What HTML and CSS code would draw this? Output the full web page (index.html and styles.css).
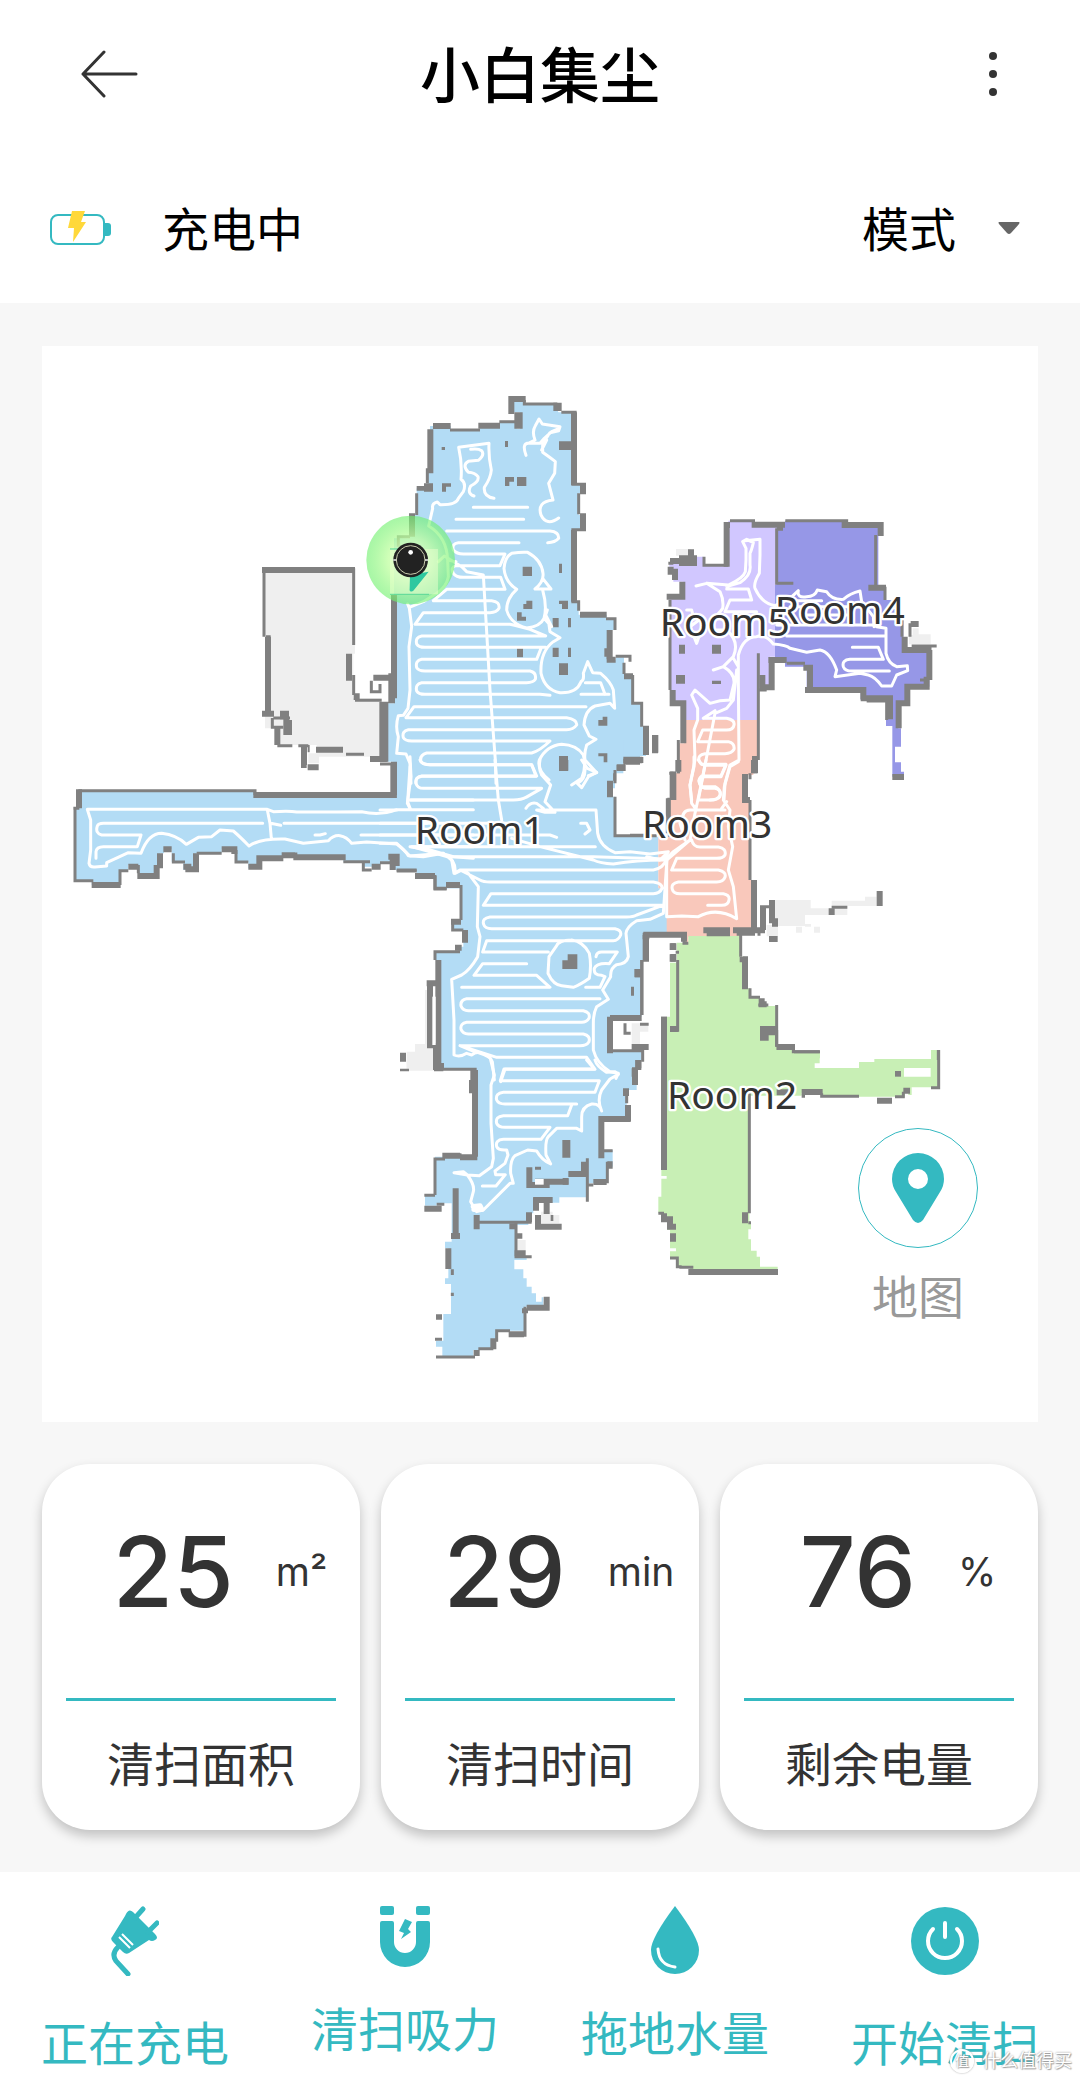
FILE: index.html
```html
<!DOCTYPE html>
<html lang="zh-CN">
<head>
    <meta charset="UTF-8">
    <meta name="viewport" content="width=device-width, initial-scale=1.0">
    <title>小白集尘</title>
    <link rel="stylesheet" href="styles.css">
</head>
<body>
    <header class="header">
        <button class="icon-btn" aria-label="返回">
            <svg width="60" height="48" viewBox="0 0 60 48" fill="none" stroke="#333" stroke-width="3" stroke-linecap="round" stroke-linejoin="round">
                <path d="M24 2L3 24L24 46M3 24H56"/>
            </svg>
        </button>
        <h1>小白集尘</h1>
        <button class="icon-btn" aria-label="更多">
            <svg width="60" height="48" viewBox="0 0 60 48" fill="#333">
                <circle cx="53" cy="6" r="4"/><circle cx="53" cy="24" r="4"/><circle cx="53" cy="42" r="4"/>
            </svg>
        </button>
    </header>

    <div class="status">
        <svg width="62" height="38" viewBox="0 0 62 38">
            <rect x="1" y="4" width="53" height="29" rx="7" fill="none" stroke="#34b9c1" stroke-width="2"/>
            <path d="M54 12h4q3 0 3 3v7q0 3-3 3h-4z" fill="#34b9c1"/>
            <path d="M22 0h13l-4 11h5L23 31l1-14h-6z" fill="#ffd83a"/>
        </svg>
        <span class="status-text">充电中</span>
        <div class="mode">
            <select aria-label="模式">
                <option>模式</option>
            </select>
            <svg class="caret" width="22" height="12" viewBox="0 0 22 12"><path d="M1 0H21Q22 0 21 2L13 11Q11 13 9 11L1 2Q0 0 1 0z" fill="#666"/></svg>
        </div>
    </div>

    <main>
        <section class="map">
            <svg class="plan" viewBox="0 0 2988 3228" role="img" aria-label="房间地图">
                <defs>
                    <radialGradient id="halo">
                        <stop offset="0" stop-color="#f4ffe8" stop-opacity=".95"/>
                        <stop offset=".5" stop-color="#c0ffa0" stop-opacity=".75"/>
                        <stop offset="1" stop-color="#6cf06a" stop-opacity=".6"/>
                    </radialGradient>
                </defs>

                <!-- unexplored areas -->
                <g class="unknown">
                    <path transform="translate(594 402)" d="M75 270H340V655H425V830H230V795H105V745H95V700H80V470H72zM205 820h32v30h-32zM75 700h20v45h-20zM318 495h27v26h-27z"/>
                    <path transform="translate(1014 1242)" d="M135 690h10v165h20v75H80V875h25V852h30zM755 790h50v25h-25v40h-25z"/>
                    <path transform="translate(1014 2142)" d="M60 0h105v32H80V0zM483 455h35v10h20v25h-55zM412 540h25v35h-25z"/>
                    <path transform="translate(1764 462)" d="M138 147h45v20h-45zM848 385h18v18h36v30h-65v-28h11z"/>
                    <path transform="translate(1764 1242)" d="M435 420H542V445H605V422H705V410H740V438H652V465H525V498H435zM498 500h18v18h-18zM552 500h18v18h-18zM525 492h18v8h-18zM410 495h34v34h-34z"/>
                </g>

                <!-- room floors -->
                <g class="room1">
                    <path transform="translate(924 102)" d="M485 57H525V72H615L625 97H670V315H699V340H686V405H699V450H672V665H686V704H770V716H792V750H780V840H797V832H822V885H848V970H875V1040H888V1128H870V1145H820V1170H795V1225H132V1145H100V970H132V475H180V405H200V325H232V270H240V138H302V150H390V137H450V125H500V146H510V97H485z"/>
                    <path transform="translate(54 1272)" d="M45 115V330H95V345H180V300H205V285H235V318H290V285H300V250H312V238H335V275H370V300H408V250H485V238H525V275H565V295H600V262H670V250H705V262H850V275H910V290H960V275H990V258H1010V300H1070V318H1125V355H1240V0H1005V75H585V62H55V115z"/>
                    <path transform="translate(1014 1242)" d="M40 0V105H0V290H45V330H110V350H165V385H240V480H220V510H250V560H235V575H165V600H180V925H285V970H770V900H785V870H690V770H785V600H795V525H865V385H835V230H705V110H690V65H705V40H730V-60H40z"/>
                    <path transform="translate(1014 2142)" d="M190 0V28H285V290H165V405H135V437H170V430H215V545H195V565H205V655H195V672H213V762H190V842H168V860H187V890H280V870H335V840H350V812H435V740H490V712H485V725H468V700H455V680H440V655H430V628H403V600H440V590H408V495H445V460H460V412H515V428H538V412H620V370H680V320H698V270H660V175H740V90H770V0z"/>
                </g>
                <g class="room5">
                    <path transform="translate(1764 462)" d="M295 62H370V75H445V470H420V560H385V662H160V610H130V570H118V290H160V245H130V200H118V190H200V170H220V195H295z"/>
                </g>
                <g class="room4">
                    <path transform="translate(1764 462)" d="M440 80H465V62H645V75H745V265H765V300H800V350H820V450H898V560H830V610H805V685H813V740H795V787H813V815H822V830H787V678H768V600H692V570H530V500H465V475H435V255H440z"/>
                </g>
                <g class="room3">
                    <path transform="translate(1764 462)" d="M162 660H382V780H370V825H345V910H130V820H145V730H162z"/>
                    <path transform="translate(1764 1242)" d="M145 0H375V40H345V120H360V360H375V515H330V530H175V548H160V520H110V385H85V230H118V120H130V40H145z"/>
                </g>
                <g class="room2">
                    <path transform="translate(1764 1242)" d="M175 528H330V590H345V685H360V712H390V738H442V860H495V875H569V910H110V770H120V608H140V548H175z"/>
                    <path transform="translate(1794 2052)" d="M72 -20H410V50H465V65H540V85H515V95H524V114H657V96H703V87H873V60H897V172H815V195H805V182H795V200H545V188H485V197H328V575H333V598H325V628H333V662H350V680H360V710H413V724H150V710H110V684H90V664H108V655H90V600H82V570H72V550H55V500H64V446H80V438H64V420H72zM792 114V140H872V114z" fill-rule="evenodd"/>
                </g>

                <!-- walls -->
                <g class="wall" transform="translate(924 102)">
                    <path d="M523 60V72H622M634 97H680M664 313H708M686 340V403M664 449H708M664 665H686V692M768 716H795V750M797 829H840V845M822 848V882M848 885V970H875V1040M795 1170V1210M232 265V310M200 340V405M180 470H145V500M300 150H390M448 125H500"/>
                    <path class="thick" d="M484 102V57H527M672 97V315M699 310V343M699 400V450M672 450V665M690 704H770M779 750V838M241 148V280M186 400V470M132 645V955M132 1145V1210M249 138H302M385 137H450M888 1037V1125"/>
                    <path class="block" d="M610 68h25v25h-25zM627 184h40v26h-40zM200 318h49v14h-49zM222 310h27v25h-27zM493 97h25v49h-25zM88 965h27v180h-27zM60 1128h50v18h-50zM115 880h20v90h-20zM770 830h27v18h-27zM763 805h18v25h-18zM822 880h27v18h-27zM820 1130h57v20h-57zM800 1155h27v18h-27zM906 1065h19v53h-19z"/>
                    <path class="block" d="M275 201h10v9h-10zM465 183h9v18h-9zM276 310h27v10h-15v15h-12zM465 291h27v14h-14v13h-13zM501 291h28v27h-28zM518 560h28v28h-28zM627 551h9v28h-9zM529 662h18v25h-27v-15h9zM501 697h14v13h13v12h-27zM627 662h27v25h-18v-15h-9zM608 714h18v28h-18zM654 714h9v28h-9zM501 805h18v27h-18zM608 803h18v28h-18zM654 803h9v28h-9zM627 850h27v35h-27zM758 1010h14v27h-27v-17h13zM745 1120h27v27h-11v-18h-16zM627 1128h27v45h-27z"/>
                </g>
                <g class="wall" transform="translate(594 402)">
                    <path d="M72 470V265M341 265V495M341 585V645M345 661H425M112 797H157M175 797H205M318 823H372M78 470H92M100 714H150M97 714V742H130M394 602V635H420V612"/>
                    <path class="thick" d="M66 270H345M84 470V700M327 521V602M112 740V795M228 809H309M400 593H455M350 640V660M192 795V855H200M203 862H236"/>
                    <path class="block" d="M66 692h36v18h-36zM120 692h27v28h9v45h-26v-47h-10zM390 828h52v17h-52zM203 795h6v22h-6z"/>
                </g>
                <g class="wall" transform="translate(54 1272)">
                    <path d="M55 62H585V75M40 115H58M45 110V332H100M180 345V302H205M235 285V310M340 250V276H375M410 250H485M528 240V276H565M850 275H930M910 275V300H935M960 278H990M1010 303H1070M1125 318V355H1160M705 252H712"/>
                    <path class="thick" d="M57 58V115M580 75H1010M1002 -20V75M95 345H182M205 290H235M232 318H290V285M300 295V250M310 238H335M370 290H385V298H408V250M485 238H523V252M565 290H598V265H670M665 256H705M700 262H857M935 290H962M998 255V300M1065 318H1125M1158 345H1200"/>
                </g>
                <g class="wall" transform="translate(1014 1242)">
                    <path d="M0 12H40M50 330H110M165 345V387H200M243 375V480M218 490V510H250M240 575H165V600M705 110V227H830M862 115V220M785 600V765M788 870V905M704 40V62M690 872H785M862 118H870M735 790V820H752M780 793H806"/>
                    <path class="thick" d="M0 105H50M40 10V105M25 290H50V318M105 348H165M200 375H240M213 485H243M255 510V548M225 563H245M175 600V925M140 670H183M150 670V865M168 850V930M178 918H192M280 930V970M690 62V112M710 22H735M730 5H780M895 0V35M879 35V120M797 600V525M912 545V524H790M774 627V652M690 770V880M690 774H785M755 861H806M775 900V930M764 925V950M880 550V570M880 582V605M852 770V1000M885 806V815"/>
                    <path class="thin-fill" d="M157 710h10v145h-10z"/>
                    <path class="block" d="M753 680h9v27h-9zM563 583h29v44h-45v-26h16zM60 878h18v27h-18zM60 926h27v8h-27zM538 0h27v32h-27z"/>
                </g>
                <g class="wall" transform="translate(1014 2142)">
                    <path d="M188 28H290M165 405V297H195M133 406H165M170 433H193M290 487H455M408 490V590H455M240 292V280M622 295V425M435 740V830M350 845V812H390M168 891H285M165 838H186M217 628V645M217 698V708M622 375H640M682 305V370M660 272H698M295 866H340M740 90V130"/>
                    <path class="thick" d="M171 0V25H190M285 30V290M276 60V100M187 287H240M240 292H292M133 446H185M227 385V535M213 528H240M290 465V508M397 490V508M418 520V536M404 580H437M205 565V627M640 366H680M664 295V177H750M744 135V185M738 85V108M765 22V75M775 0V25M448 322V375H509M465 365H565M565 342H622M612 305V350M447 457V487M468 412V452M460 420H518M500 420V462M474 465V500H545M500 710V743H440M435 745V760M432 823H386M340 835V868M290 870V888"/>
                    <path class="block" d="M547 240h24v53h-24zM465 320h18v9h-18zM512 465h8v18h-8zM168 763h18v16h-18zM682 304h16v22h-16zM548 354h18v20h-18z"/>
                    <path class="thin-fill" d="M465 357h26v17h-26z"/>
                </g>
                <g class="wall" transform="translate(1764 462)">
                    <path d="M300 62H375M466 62H650V70M440 85V250H490M737 105V260M765 260V300M816 355V410M840 370V410M900 440V530M385 460V780M120 300V570M222 170V196H295M115 190H130M710 603H780M145 720V820M770 600V660M118 820H130M360 820V838M845 438H920M385 570H410M470 490H525M870 540H890"/>
                    <path class="thick" d="M290 200V75H300M365 74H465M450 75V92M635 75H752V108M715 263H768M120 183H195M160 190V170M183 148V170M122 200V215H135V240M157 245V290H110M128 570V610H160V730M425 475V562H397V525M415 480H470M520 503H540V570H525M530 570H700V598M692 595H780V658M806 685V610H832V560H890V530M898 450V540M824 410V450H900M842 372H866M75 705V760M48 680V765M375 768V820M345 825V900M130 815V900M787 831H822M15 780H40"/>
                    <path class="block" d="M147 434h18v27h-18zM246 434h27v27h-27zM138 525h27v26h-27zM246 542h27v10h-27zM147 166h54v32h-54z"/>
                </g>
                <g class="wall" transform="translate(1764 1242)">
                    <path d="M145 0V40M118 120V230M360 120V360M387 515V527M390 440H418M400 440V510M0 226H45M143 600V815M137 577H147M110 522H162V550H175M332 520V590M360 685V712H390M385 735H415M440 735V860M490 860V875H569M605 442H652M36 600V765M925 870V900"/>
                    <path class="thick" d="M128 35V120M372 0V40M345 42V120H360M372 360V515M220 511H300M230 518H300M309 511H405M230 520H300M320 518H375M399 440V510M426 420V490M435 475V500M417 537H443M749 393V438M605 445V465M48 525V605M22 627V652M128 550V570M128 583V605M102 770V910M120 807H145M338 590V598H345V688M395 715V733H410M440 861H495M425 800V825"/>
                    <path class="block" d="M390 798h50v28h-24v16h-26zM38 518h20v20h-20z"/>
                </g>
                <g class="wall" transform="translate(1794 2052)">
                    <path d="M328 190V550M410 0V50M462 65H540M545 190V199H657M485 199H495M765 200H790V185M873 173H896V60M55 550H72M90 684H112V710H125M118 712H160M325 578H333"/>
                    <path class="thick" d="M72 -20V420M72 550V568H90V590H108M99 610V635M145 726H414M315 547V580M485 186H548M410 187H450M711 212H756M790 182H810M410 51H465"/>
                    <path class="block" d="M765 123h18v17h-18z"/>
                </g>

                <!-- cleaning path -->
                <g class="track">
                    <path transform="translate(924 102)" d="M372 348Q350 340 362 318Q388 305 384 290Q375 278 355 277Q335 255 355 244L385 241Q405 225 395 212Q385 205 362 208
                        M432 355Q400 350 403 322Q422 295 424 270Q415 230 417 190L326 202Q337 250 333 298Q350 310 340 335L325 355Q320 375 270 374L262 366Q245 370 248 385L236 438Q290 470 293 540L318 545
                        M528 226Q515 190 535 190L555 180Q545 155 556 137L567 117L577 132L630 140L626 152L600 158L578 190V217Q610 240 616 245L614 280L596 310L609 360Q560 365 573 405Q590 440 626 414M530 190H570L583 175L605 155L628 145M575 210L590 180
                        M370 382H533M318 418H521M290 453H600Q627 455 626 475Q615 488 593 488M507 488H325Q305 490 310 510Q320 522 340 522H465L450 557H318Q300 562 310 580Q318 592 340 592H452L465 628H290L250 662H425Q450 665 447 685Q440 698 420 698H220L195 733H482L540 748L587 768H215Q195 772 200 792Q205 802 225 802H587M573 805L560 838H215Q195 842 200 863Q205 873 225 873H540Q560 877 556 898Q550 908 530 908H215Q195 912 200 933Q205 943 225 943H570L600 946
                        M708 980H192L168 1013H650Q682 1018 680 1035Q670 1049 650 1049H175Q155 1053 160 1073Q165 1083 185 1083H600Q570 1112 545 1119H230Q208 1125 213 1145Q220 1154 240 1154H545L560 1188H215Q195 1190 198 1210
                        M265 545L283 528L335 560L350 575L400 585L412 790L420 930L436 1140L438 1210
                        M173 672L178 685L185 740L177 800L180 930L174 985L160 1006L145 1007Q135 1040 145 1070L140 1120L168 1122L180 1150L183 1210M178 682L220 665L260 640Q290 620 295 590L293 540
                        M500 628Q465 605 462 565Q465 530 485 520Q515 515 533 517Q575 540 579 580Q582 605 555 627H603L578 595M500 628Q470 655 470 690Q480 730 530 744Q570 740 582 715Q592 680 578 630M530 744L480 733M582 715L605 740L587 705L592 690M595 720L600 755L630 773L610 785Q570 815 573 880Q585 930 630 938Q680 940 693 905Q703 900 700 880L713 845L728 878L752 880Q782 905 790 930L794 985L780 970L735 978Q705 990 702 1035L718 1068L738 1078L710 1095Q702 1120 705 1140L740 1178L715 1187M706 908H752L765 943M693 943H777
                        M597 1200Q560 1170 568 1140Q590 1097 635 1093Q680 1095 700 1125Q710 1160 695 1195L665 1215"/>
                    <path transform="translate(54 1272)" d="M82 118H622L640 125Q690 122 710 126H830L905 125Q960 138 1010 119H1240
                        M82 118L92 150V240L87 280Q90 293 105 291L140 288V278L205 248L243 250Q265 190 305 190Q350 195 379 223L415 202L455 200L480 180L520 183Q540 200 567 228Q600 205 675 207L730 220L805 212Q820 195 840 197Q860 200 875 220L920 216L1010 222Q1035 240 1045 257L1090 260L1150 250Q1190 270 1185 310L1200 303
                        M108 265V245Q110 230 130 230H232L243 195H125Q105 190 112 168Q115 160 130 160H608M622 120L630 160L634 205M632 160L662 166M672 160H1100M903 195H1240M765 195H780L796 191
                        M1050 230L1110 240L1180 260L1240 265M1050 230H1240M1052 90H1240M1050 -10L1043 95L1050 115"/>
                    <path transform="translate(1014 1242)" d="M120 0Q125 13 145 14H455L468 49H125Q105 52 108 70Q112 85 130 85H485L438 112Q425 120 400 120H90M90 -10L93 50L82 130L90 145M345 0L355 120L365 180M438 145Q450 125 470 130L490 145M480 0Q475 25 485 45L512 75L495 125L525 157H495L470 150H648L653 220Q660 260 705 278L750 275L810 282L865 275L850 300Q770 300 700 312Q660 310 640 300L480 260L395 235
                        M605 0L622 25L650 37L625 50L605 83L592 70Q615 60 615 30M602 190H620L630 210L615 222M50 150H0M0 190H400M0 225H510L530 232M0 250H50L90 288L190 280L215 300L222 340L240 330M95 260H646M95 260L200 290H640L860 297Q850 325 820 330H240L300 360Q310 366 330 366H820Q848 370 846 385Q840 400 820 401H333L310 436H848L770 465Q760 471 740 471H330Q305 475 311 493Q315 506 335 506H705Q725 510 722 525Q715 542 700 542H320L308 576H505
                        M440 611H308L282 646H470L510 682H245M660 716H260Q240 720 243 738Q248 752 265 752H610Q632 757 627 775Q620 787 605 787H260Q240 790 243 808Q248 822 265 822H610Q632 827 627 845Q620 857 600 857H240L350 892H620L645 928H375L362 965
                        M240 330L265 340L295 380L292 500L300 530L293 590Q270 630 245 645L215 658L222 780V885Q240 893 260 880L275 885L290 876Q335 890 337 905L343 960M290 878L240 857
                        M575 540Q535 540 528 560L507 590L504 640Q520 675 545 677L580 682Q600 675 628 655Q635 615 628 580Q610 545 575 540M648 590Q650 576 665 576H712L688 611Q650 608 643 625Q640 646 665 646L675 650L660 682H617
                        M862 280L850 460L810 478L770 482Q740 500 738 520L745 590Q740 612 710 614Q690 625 692 650L668 690L685 718L650 740Q640 760 640 790V870Q650 910 690 935L715 940L708 955"/>
                    <path transform="translate(1014 2142)" d="M332 0L343 45L333 75V190L340 295L335 320L298 347L262 345L250 335L222 338L262 345Q285 375 280 395L272 425L290 455L310 450L390 370L400 370L392 340Q390 300 405 287L443 270L470 273Q485 300 512 312L498 285Q495 240 505 230L530 205L590 205L605 213V170Q605 140 635 132Q660 130 665 153Q650 120 665 90L690 57L715 43L705 35L680 37Q650 20 645 0M620 0L643 27H372L361 62H658L645 97H370Q345 100 350 120Q355 132 375 132H590M575 135L563 167H370Q345 170 350 190Q355 202 375 202H510L483 238H370Q345 240 350 260Q355 272 380 270L384 285L375 310L345 333L347 344H376L348 378H307"/>
                    <path transform="translate(1014 2142)" class="dock" d="M280 440L300 438L305 448H282"/>
                    <path transform="translate(1764 462)" d="M198 258L230 250L295 255Q340 235 346 215L348 180V145L338 125L350 118L370 128Q365 150 360 160V195Q365 225 330 248L290 260M345 122L390 118V165L388 220Q370 250 375 265Q395 310 435 317
                        M230 250L270 275Q282 300 278 325Q265 345 245 355M290 267H355L365 300H300L285 335H380M170 330H185L190 350L210 358L180 380L200 430L210 400M240 390L290 390Q330 425 310 470L280 500L250 510M310 475L325 500M435 317L480 295L505 272Q500 295 530 290Q555 290 562 270L590 275Q605 300 640 298Q660 280 690 273L695 305L730 350L732 380M480 320H730M500 302H575M440 375H730M470 408H765M515 345H650M740 380L768 385V460Q775 490 800 500L832 497L833 512L800 525L785 558H755Q735 530 715 525L690 520L615 530L620 510Q600 455 570 450L530 457L480 445Q470 435 430 432Q405 400 380 410Q340 410 325 465V540L327 780L300 795
                        M667 442H745L760 478H660Q635 480 640 500Q645 513 665 513H778M280 500Q315 520 312 550L300 600Q270 600 240 610L195 570L185 585L203 625V660L192 690L195 780L180 855L185 900M220 655H290Q315 660 312 675Q310 690 290 690H218L203 725H295Q315 730 312 748Q305 761 285 761H225Q203 765 207 780Q210 796 230 796H288L273 830M320 510L310 600L290 625L255 640L205 900M220 655L255 632M273 830H225Q205 832 207 845Q210 860 225 865H255Q275 870 270 885Q265 900 240 900M300 795L285 850L282 900"/>
                    <path transform="translate(1764 1242)" d="M192 -10V20L180 75L185 130L200 150M228 0L210 90L195 160L180 240L110 300V470L155 468L205 470Q260 440 320 476L310 380L295 330L308 260L295 200L300 150L280 120L283 80L300 20L325 5M205 0L215 13H288L273 48H215Q200 60 215 80H255Q275 90 270 110Q265 120 240 120H205M275 145L290 125M200 150H285M155 190Q155 150 180 150H280M150 190L165 240M185 240Q190 261 210 261H265Q290 265 285 285Q280 295 260 295H140L125 330H265Q290 335 285 352Q280 366 260 366H145Q122 370 127 388Q130 401 150 401H280Q300 405 297 420Q295 436 275 436H233M110 280L90 300L50 290M105 300L130 275L180 240"/>
                </g>

                <!-- dock halo and robot -->
                <g transform="translate(1106 642)">
                    <circle r="133" fill="url(#halo)"/>
                    <path d="M-62-33H82V103H-62z" fill="#ecffd0" fill-opacity=".5"/>
                    <path d="M-62-33H10M-62 103H55" stroke="#40d090" stroke-width="4" opacity=".6"/>
                    <path d="M-2 45L54 35L8 92Q-5 100-3 85z" fill="#2fc8a0"/>
                    <circle r="52" fill="#222"/>
                    <circle r="43" fill="none" stroke="#c9ccae" stroke-width="3"/>
                    <path d="M-52 0h9M43 0h9" stroke="#eee" stroke-width="4"/>
                    <circle cy="-23" r="7" fill="#fff"/>
                </g>

                <g class="room-name">
                    <text x="1118" y="1494">Room1</text>
                    <text x="1875" y="2289">Room2</text>
                    <text x="1800" y="1477">Room3</text>
                    <text x="2198" y="834">Room4</text>
                    <text x="1853" y="871">Room5</text>
                </g>
            </svg>

            <button class="map-btn">
                <span class="map-circle">
                    <svg width="52" height="70" viewBox="0 0 52 70"><path fill="#34b9c1" fill-rule="evenodd" d="M26 0A26 26 0 0 0 0 26Q0 33 4 39L21 67Q26 73 31 67L48 39Q52 33 52 26A26 26 0 0 0 26 0zM26 16a10 10 0 1 1 0 20a10 10 0 0 1 0-20z"/></svg>
                </span>
                地图
            </button>
        </section>

        <section class="cards">
            <div class="card">
                <div class="value"><span class="num">25</span><span class="unit">m²</span></div>
                <div class="label">清扫面积</div>
            </div>
            <div class="card">
                <div class="value"><span class="num">29</span><span class="unit">min</span></div>
                <div class="label">清扫时间</div>
            </div>
            <div class="card">
                <div class="value"><span class="num">76</span><span class="unit">%</span></div>
                <div class="label">剩余电量</div>
            </div>
        </section>
    </main>

    <nav class="tabs">
        <button class="tab">
            <svg class="tall" width="48" height="70" viewBox="0 0 48 70">
                <path d="M15 8Q18 2 22 6L44 28Q48 32 44 34Q41 36 38 34L18 47Q15 49 12 46L2 36Q-1 33 1 31L14 10z" fill="#34b9c1"/>
                <path d="M24 12L32 3M37 26L46 17M7 41Q0 48 5 55L17 68" fill="none" stroke="#34b9c1" stroke-width="5" stroke-linecap="round"/>
                <path d="M8 31L19 42M11 28L22 39" stroke="#fff" stroke-width="2"/>
            </svg>
            正在充电
        </button>
        <button class="tab">
            <svg width="50" height="64" viewBox="0 0 50 64" fill="#34b9c1">
                <rect width="14" height="9" rx="2"/><rect x="36" width="14" height="9" rx="2"/>
                <path d="M2 15H12Q14 15 14 17V36A11 11 0 0 0 36 36V17Q36 15 38 15H48Q50 15 50 17V36A25 25 0 0 1 0 36V17Q0 15 2 15z"/>
                <path d="M25 13L32 16L28 23L31 26L21 33L24 27L19 25z"/>
            </svg>
            清扫吸力
        </button>
        <button class="tab">
            <svg width="48" height="68" viewBox="0 0 48 68">
                <path d="M24 0Q48 32 48 44A24 24 0 0 1 0 44Q0 32 24 0z" fill="#34b9c1"/>
                <path d="M7 43Q8 59 24 61" fill="none" stroke="#fff" stroke-width="3" stroke-linecap="round"/>
            </svg>
            拖地水量
        </button>
        <button class="tab">
            <svg class="tall" width="68" height="70" viewBox="0 0 68 70">
                <circle cx="34" cy="35" r="34" fill="#34b9c1"/>
                <path d="M34 17V31M22 23A17 17 0 1 0 46 23" fill="none" stroke="#fff" stroke-width="4" stroke-linecap="round"/>
            </svg>
            开始清扫
        </button>
    </nav>

    <div class="watermark"><span class="mark">值</span>什么值得买</div>
</body>
</html>
```
FILE: styles.css
```css
* {
    box-sizing: border-box;
}
body {
    margin: 0;
    position: relative;
    background: #f7f7f7;
    color: #333;
    font-family: Inter, "Noto Sans CJK SC", sans-serif;
}
button,
select {
    border: none;
    padding: 0;
    background: none;
    color: inherit;
    font: inherit;
    cursor: pointer;
}
svg {
    display: block;
}
.header {
    display: flex;
    align-items: center;
    justify-content: space-between;
    height: 148px;
    padding: 0 80px;
    background: white;
}
.header h1 {
    margin: 0;
    padding-bottom: 4px;
    color: black;
    font-size: 60px;
    font-weight: 500;
    line-height: 80px;
    font-family: "Noto Sans CJK SC", sans-serif;
}
.status {
    display: flex;
    align-items: center;
    height: 155px;
    padding: 8px 50px 0;
    background: white;
    color: black;
    font-size: 47px;
    line-height: 60px;
}
.status-text {
    margin-left: 50px;
}
.mode {
    position: relative;
    margin-left: auto;
}
.mode select {
    appearance: none;
    height: 60px;
    padding-right: 74px;
}
.caret {
    position: absolute;
    top: 22px;
    right: 10px;
    pointer-events: none;
}
main {
    padding: 43px 42px 42px;
}

/* map */
.map {
    position: relative;
    background: white;
}
.plan {
    width: 100%;
}
.room1 { fill: #b3dcf5; }
.room2 { fill: #c8efb5; }
.room3 { fill: #f9c8bb; }
.room4 { fill: #9697e7; }
.room5 { fill: #d1c7ff; }
.unknown { fill: #efefef; }
.wall {
    fill: none;
    stroke: #808080;
    stroke-width: 9;
}
.wall .thick {
    stroke-width: 18;
}
.wall .block {
    fill: #808080;
    stroke: none;
}
.wall .thin-fill {
    fill: white;
    stroke: none;
}
.track {
    fill: none;
    stroke: white;
    stroke-width: 9;
    stroke-linecap: round;
    stroke-linejoin: round;
}
.track .dock {
    stroke-width: 16;
}
.room-name {
    fill: #333;
    stroke: white;
    stroke-width: 14;
    stroke-linejoin: round;
    paint-order: stroke;
    font-family: "Noto Sans", sans-serif;
    font-size: 117px;
}
.map-btn {
    position: absolute;
    right: 60px;
    bottom: 94px;
    display: flex;
    flex-direction: column;
    align-items: center;
    gap: 18px;
    color: #999;
    font-size: 46px;
    line-height: 62px;
}
.map-circle {
    display: flex;
    align-items: center;
    justify-content: center;
    width: 120px;
    height: 120px;
    border: 1px solid #34b9c1;
    border-radius: 50%;
    background: white;
}

/* stats */
.cards {
    display: grid;
    grid-template-columns: repeat(3, 1fr);
    gap: 21px;
    margin-top: 42px;
}
.card {
    padding: 0 24px 35px;
    border-radius: 48px;
    background: white;
    box-shadow: 0 6px 12px rgba(0, 0, 0, 0.22);
}
.value {
    display: flex;
    align-items: center;
    justify-content: center;
    gap: 42px;
    height: 237px;
    padding: 0 0 18px 38px;
    border-bottom: 3px solid #34b9c1;
}
.num {
    font-size: 98px;
    font-weight: 500;
    line-height: 120px;
}
.unit {
    font-size: 39px;
    line-height: 50px;
}
.label {
    padding-top: 34px;
    font-size: 47px;
    line-height: 60px;
    text-align: center;
}

/* bottom bar */
.tabs {
    display: grid;
    grid-template-columns: repeat(4, 1fr);
    height: 210px;
    padding-top: 34px;
    background: white;
}
.tab {
    display: flex;
    flex-direction: column;
    align-items: center;
    color: #34b9c1;
    font-size: 47px;
    line-height: 60px;
}
.tab svg {
    margin-bottom: 30px;
}
.tab .tall {
    margin-bottom: 38px;
}
.watermark {
    position: absolute;
    right: 8px;
    bottom: 8px;
    display: flex;
    align-items: center;
    gap: 8px;
    color: white;
    font-size: 18px;
    line-height: 26px;
    text-shadow: 0 0 2px #888, 1px 1px 1px #aaa;
}
.mark {
    width: 24px;
    height: 24px;
    border: 2px solid white;
    border-radius: 50%;
    box-shadow: 0 0 2px #999;
    font-size: 14px;
    line-height: 20px;
    text-align: center;
}
```
